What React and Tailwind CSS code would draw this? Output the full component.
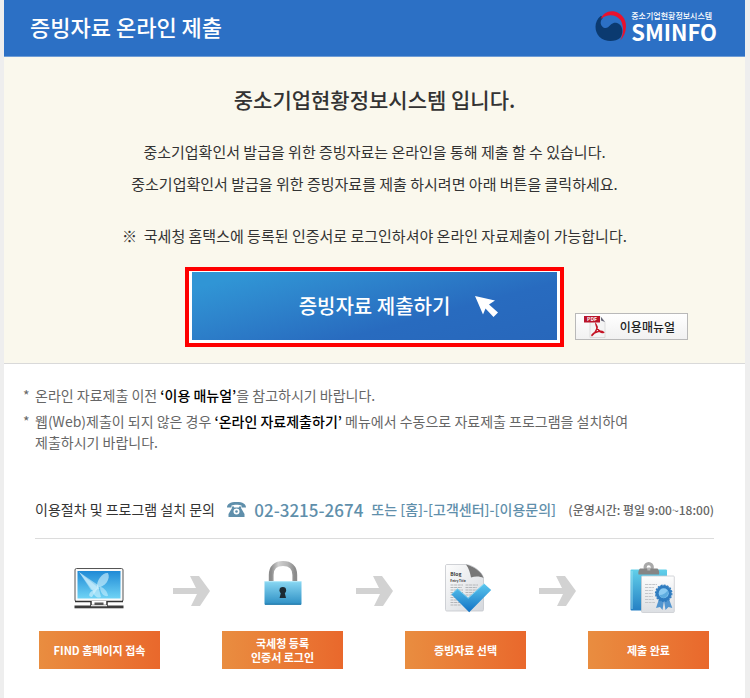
import React from 'react';

const steps = [
  { label: 'FIND 홈페이지 접속', icon: MonitorIcon },
  { label: '국세청 등록\n인증서 로그인', icon: LockIcon },
  { label: '증빙자료 선택', icon: DocumentIcon },
  { label: '제출 완료', icon: ClipboardIcon },
];

function LogoMark() {
  return (
    <svg viewBox="12 13 96 94" className="h-8 w-8" aria-hidden="true">
      <path
        d="M30 29C10 43 8 74 25 92C43 109 72 108 88 95C99 80 95 56 78 51C64 48 59 58 51 64C41 70 30 62 29 51C29 45 31 40 36 35Z"
        fill="#0b3a70"
      />
      <path
        d="M29 39C36 21 52 13 68 16C91 20 106 40 105 62C104 80 98 92 88 103C98 84 99 60 89 43C76 24 48 22 29 39Z"
        fill="#e8112d"
      />
    </svg>
  );
}

function CursorIcon() {
  return (
    <svg viewBox="0 0 23 21" className="h-[21px] w-[23px]" aria-hidden="true">
      <path d="M0 0L20 4.500L14 8.500L23 16.500L18.500 21L10.500 12.500L8 18.500Z" fill="#fff" />
    </svg>
  );
}

function PdfIcon() {
  return (
    <svg viewBox="0 0 22 22" className="h-[22px] w-[22px]" aria-hidden="true">
      <path d="M6 1H17L21 6V21.5H6Z" fill="#f4f4f4" stroke="#ccc" strokeWidth=".6" />
      <path d="M17 1L21 6L17 4.5Z" fill="#667" />
      <rect width="16" height="6.5" fill="#b9152b" />
      <text x="8" y="5.2" textAnchor="middle" fontSize="5" fontWeight="700" fill="#fff">PDF</text>
      <path
        d="M12 8.500C14 11 13 15 8 19.500C7.500 19 9 17.500 11.500 16.500C14 15.500 18 15 19.500 16.300C18 17.500 12.500 14 12 8.500Z"
        fill="none"
        stroke="#c41425"
        strokeWidth="1.5"
      />
    </svg>
  );
}

function PhoneIcon() {
  return (
    <svg viewBox="0 0 19 15" className="h-[15px] w-[19px]" aria-hidden="true">
      <path
        d="M0 5.500C0 2 3 0 9.500 0S19 2 19 5.500H14.500V3.500C12 2.500 7 2.500 4.500 3.500V5.500Z"
        fill="#5f8fab"
      />
      <path
        fillRule="evenodd"
        d="M5 4.500H7V5.500H12V4.500H14V6L17.500 12V15H1.500V12L5 6ZM9.500 6.500A3 3 0 1 0 9.500 12.500A3 3 0 1 0 9.500 6.500Z"
        fill="#5f8fab"
      />
      <circle cx="9.500" cy="9.500" r="1.300" fill="#5f8fab" />
    </svg>
  );
}

function ArrowIcon() {
  return (
    <svg viewBox="0 0 37 30" className="h-[30px] w-[37px]" aria-hidden="true">
      <path d="M0 12H23L17 0H26L37 15L27 30H18L24 18H0Z" fill="#d2d2d2" />
    </svg>
  );
}

function MonitorIcon() {
  return (
    <svg viewBox="0 0 60 56" className="h-14 w-[60px]" aria-hidden="true">
      <defs>
        <linearGradient id="screen" x1="0" y1="0" x2="0" y2="1">
          <stop offset="0" stopColor="#1f8ad6" />
          <stop offset="1" stopColor="#6fd3f5" />
        </linearGradient>
      </defs>
      <rect x="5" y="9.500" width="48" height="33" rx="1.500" fill="#fafafa" stroke="#555" />
      <path d="M5 42.500H53" stroke="#333" strokeWidth="1.600" />
      <rect x="7.500" y="12" width="43" height="27.500" fill="url(#screen)" />
      <g fill="#d9f5ff">
        <path d="M9 13L28 26L31 38C27 40 23 36 23 32Z" opacity=".55" />
        <path d="M9 13L21 31L30 30Z" opacity=".5" />
        <path d="M27 29C26 21 33 13 38 14C41 20 35 28 27 29Z" opacity=".6" />
        <path d="M30 28C33 27 38 33 38 37C34 38 30 34 30 28Z" opacity=".5" />
        <path d="M28 29L22 38C18 38 17 33 28 29Z" opacity=".6" />
      </g>
      <path d="M21 42V46.500H37V42" fill="#fff" stroke="#333" strokeWidth="1.500" />
      <rect x="24.500" y="43.500" width="9" height="3" fill="#555" />
      <rect x="4.500" y="46.500" width="49" height="2.800" fill="#3c3c3c" />
      <rect x="21" y="46" width="16" height="1.300" fill="#ddd" />
    </svg>
  );
}

function LockIcon() {
  return (
    <svg viewBox="0 0 60 56" className="h-14 w-[60px]" aria-hidden="true">
      <defs>
        <linearGradient id="lockBody" x1="0" y1="0" x2="0" y2="1">
          <stop offset="0" stopColor="#8ad8f3" />
          <stop offset="1" stopColor="#2d8fc4" />
        </linearGradient>
        <linearGradient id="shackle" x1="0" y1="0" x2="1" y2="0">
          <stop offset="0" stopColor="#8b8b8b" />
          <stop offset=".3" stopColor="#d0d0d0" />
          <stop offset=".7" stopColor="#b5b5b5" />
          <stop offset="1" stopColor="#8b8b8b" />
        </linearGradient>
      </defs>
      <path
        d="M18.200 23V16C18.200 8 23 4.500 30 4.500S41.800 8 41.800 16V23"
        fill="none"
        stroke="url(#shackle)"
        strokeWidth="4.800"
      />
      <rect x="11.500" y="22" width="37" height="23.700" rx=".8" fill="url(#lockBody)" />
      <path d="M12 22.600H48" stroke="#b8ecfb" />
      <path d="M12 45.200H48" stroke="#2479a8" />
      <circle cx="29.800" cy="31.300" r="3.300" fill="#1c2a33" />
      <path d="M28.300 32H31.300L33 39H26.600Z" fill="#1c2a33" />
    </svg>
  );
}

function DocumentIcon() {
  return (
    <svg viewBox="0 0 60 56" className="h-14 w-[60px]" aria-hidden="true">
      <defs>
        <linearGradient id="sheet" x1="0" y1="0" x2="1" y2="1">
          <stop offset="0" stopColor="#fdfdfd" />
          <stop offset="1" stopColor="#d5d8dd" />
        </linearGradient>
        <linearGradient id="tick" x1="0" y1="0" x2="0" y2="1">
          <stop offset="0" stopColor="#5cc8ef" />
          <stop offset="1" stopColor="#1171c4" />
        </linearGradient>
      </defs>
      <path
        d="M11 5.500H30C36 6 46 12 47.500 19V50.500C47.500 51.500 47 52 46 52H11C10 52 9.500 51.500 9.500 50.500V7C9.500 6 10 5.500 11 5.500Z"
        fill="url(#sheet)"
        stroke="#c4c7cb"
        strokeWidth=".8"
      />
      <path d="M30 5.500C33 9 34 14 35 18.500C39 17 44 17 47.500 19C46 13 37 7 30 5.500Z" fill="#777" />
      <text x="14.300" y="16.500" fontSize="5" fontWeight="700" fill="#333">Blog</text>
      <text x="14.300" y="22.700" fontSize="3" fontWeight="700" fill="#333">Entry Title</text>
      <path
        d="M14.500 26H27M14.500 28.500H26M14.500 31H27M14.500 33.500H27M14.500 36H26M14.500 38.500H27M14.500 41H27M14.500 43.500H27M14.500 46H25M29.500 26H42M29.500 28.500H41M29.500 31H42M29.500 33.500H40M29.500 36H38"
        stroke="#b4b6b9"
        strokeWidth="1"
        strokeDasharray="3 .6"
      />
      <path d="M15.200 35.300L21.500 29.500L32.200 38.700L48 24.500L55.200 31L33.200 53.300Z" fill="url(#tick)" />
      <path d="M15.700 35.300L21.500 30L32.200 39.300L48 25" fill="none" stroke="#8fdcf7" strokeWidth=".7" />
    </svg>
  );
}

function ClipboardIcon() {
  return (
    <svg viewBox="0 0 60 56" className="h-14 w-[60px]" aria-hidden="true">
      <defs>
        <linearGradient id="board" x1="0" y1="0" x2="0" y2="1">
          <stop offset="0" stopColor="#62d0ea" />
          <stop offset="1" stopColor="#2580c4" />
        </linearGradient>
        <linearGradient id="paper" x1="0" y1="0" x2="0" y2="1">
          <stop offset="0" stopColor="#fdfdfd" />
          <stop offset="1" stopColor="#dcdfe3" />
        </linearGradient>
      </defs>
      <rect x="11.500" y="10.500" width="36.500" height="41" rx="1" fill="url(#board)" />
      <path d="M13 12V50" stroke="#a8e7f5" strokeWidth=".8" />
      <circle cx="29.700" cy="8.300" r="3.600" fill="none" stroke="#a9a9a9" strokeWidth="3.200" />
      <path d="M21 9.500H38.500C40 11 40.500 13 40 15.500H19.500C19 13 19.500 11 21 9.500Z" fill="#858585" />
      <rect x="28.300" y="8.500" width="3" height="3" fill="#b3b3b3" />
      <rect x="22.500" y="17" width="32.800" height="36.500" rx="1" fill="url(#paper)" stroke="#c9ccd0" strokeWidth=".8" />
      <path
        d="M26 25.500H38M26 28.500H35M26 31.500H34M26 34.500H34M26 37.500H34M26 40.500H35M26 43.500H36"
        stroke="#c3c6ca"
        strokeWidth="1.200"
        strokeDasharray="3 .6"
      />
      <path d="M40 40L37 49L41 48L43.500 51L45 42L46.500 51L49.500 48L53.300 49L50 40Z" fill="#5295cf" />
      <circle cx="44.700" cy="34.300" r="8" fill="#2f7cc0" />
      <circle cx="44.700" cy="34.300" r="8.200" fill="none" stroke="#2f7cc0" strokeWidth="1.200" strokeDasharray="2 1.200" />
      <circle cx="44.700" cy="34.300" r="5" fill="#8ccbf2" />
      <path d="M40.500 36C44 36 47 34 48.500 31.500C50 35 48 39 44.700 39C42.500 39 41 38 40.500 36Z" fill="#5eacdf" />
    </svg>
  );
}

export default function App() {
  return (
    <div className="min-h-screen bg-[#eeeeee] pl-1 pr-[5px] font-['Noto_Sans_CJK_KR',sans-serif]">
      <main className="min-h-screen bg-white">
        <header className="flex h-[57px] items-center justify-between border-b border-[#6f9dd6] bg-[#2c70c5] pb-1 pl-[26px] pr-7 text-white">
          <h1 className="text-[22px] font-medium leading-8">증빙자료 온라인 제출</h1>
          <div className="flex items-center gap-1">
            <LogoMark />
            <div>
              <p className="text-[8px] font-medium leading-[10px]">중소기업현황정보시스템</p>
              <p className="text-[22px] font-bold leading-5">SMINFO</p>
            </div>
          </div>
        </header>

        <section className="border-b border-[#d9d9d9] bg-[#faf8ed] pb-4 pt-[26px] text-[#333]">
          <div className="text-center text-[15px] leading-8">
            <h2 className="text-[21px] font-medium leading-8">중소기업현황정보시스템 입니다.</h2>
            <p className="mt-[21px]">중소기업확인서 발급을 위한 증빙자료는 온라인을 통해 제출 할 수 있습니다.</p>
            <p>중소기업확인서 발급을 위한 증빙자료를 제출 하시려면 아래 버튼을 클릭하세요.</p>
            <p className="mt-5">※&nbsp; 국세청 홈택스에 등록된 인증서로 로그인하셔야 온라인 자료제출이 가능합니다.</p>
          </div>

          <div className="mt-[15px] grid grid-cols-[1fr_auto_1fr] items-end gap-[11px]">
            <div className="col-start-2 border-4 border-[#fe0000] bg-white px-[3px] pb-[3px] pt-px">
              <button
                type="button"
                className="grid h-[68px] w-[365px] grid-cols-[1fr_auto_1fr] items-center gap-[25px] bg-[linear-gradient(165deg,#3095d5_10%,#2e86cd_30%,#286bbf_65%,#2867bb_100%)] text-[20px] font-medium text-white"
              >
                <span className="col-start-2">증빙자료 제출하기</span>
                <CursorIcon />
              </button>
            </div>
            <a
              href="#manual"
              className="mb-[7px] flex h-[27px] w-[113px] items-center justify-between border border-[#b9b9b9] bg-linear-to-b from-white to-[#f1f1f1] pl-2 pr-3 text-[12px] font-medium text-[#222]"
            >
              <PdfIcon />
              이용매뉴얼
            </a>
          </div>
        </section>

        <ul className="space-y-[5px] pl-[19px] pr-4 pt-[21px] text-[14px] leading-[21px] text-[#666]">
          <li className="flex">
            <span className="w-3 shrink-0">*</span>
            <p>
              온라인 자료제출 이전 <strong className="font-medium text-black">‘이용 매뉴얼’</strong>을 참고하시기 바랍니다.
            </p>
          </li>
          <li className="flex">
            <span className="w-3 shrink-0">*</span>
            <p>
              웹(Web)제출이 되지 않은 경우 <strong className="font-medium text-black">‘온라인 자료제출하기’</strong> 메뉴에서 수동으로 자료제출 프로그램을 설치하여
              <br />
              제출하시기 바랍니다.
            </p>
          </li>
        </ul>

        <section className="px-[31px] pt-10">
          <div className="flex h-[46px] items-center justify-between border-b border-[#dcdcdc] pb-3 text-[14px] font-medium text-[#5f8fab]">
            <h3 className="font-normal text-[#333]">이용절차 및 프로그램 설치 문의</h3>
            <div className="flex items-center gap-2">
              <PhoneIcon />
              <a href="tel:02-3215-2674" className="text-[17px]">02-3215-2674</a>
              <span>또는 [홈]-[고객센터]-[이용문의]</span>
            </div>
            <span className="text-[12px] text-[#666]">(운영시간: 평일 9:00~18:00)</span>
          </div>

          <div className="flex items-start justify-between pl-1 pr-[5px] pt-5">
            {steps.map((step, i) => (
              <React.Fragment key={step.label}>
                {i > 0 && (
                  <div className="pt-[17px]">
                    <ArrowIcon />
                  </div>
                )}
                <div className="flex w-[121px] flex-col items-center gap-4">
                  <step.icon />
                  <div className="flex h-[38px] w-full items-center justify-center bg-linear-to-r from-[#e98d40] to-[#e9682c]">
                    <p className="whitespace-pre-line text-center text-[11px] font-bold leading-[14px] text-white">
                      {step.label}
                    </p>
                  </div>
                </div>
              </React.Fragment>
            ))}
          </div>
        </section>
      </main>
    </div>
  );
}
